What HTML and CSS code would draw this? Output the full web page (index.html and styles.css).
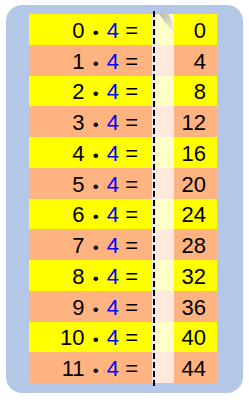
FILE: index.html
```html
<!DOCTYPE html>
<html>
<head>
<meta charset="utf-8">
<link rel="stylesheet" href="styles.css">
</head>
<body>
<div class="panel">
  <div class="table">
    <div class="row y"><div class="q"><span>0 <span class="dot">•</span> <span class="b">4</span> =</span></div><div class="gut"></div><div class="hide"></div><div class="a">0</div></div>
    <div class="row p"><div class="q"><span>1 <span class="dot">•</span> <span class="b">4</span> =</span></div><div class="gut"></div><div class="hide"></div><div class="a">4</div></div>
    <div class="row y"><div class="q"><span>2 <span class="dot">•</span> <span class="b">4</span> =</span></div><div class="gut"></div><div class="hide"></div><div class="a">8</div></div>
    <div class="row p"><div class="q"><span>3 <span class="dot">•</span> <span class="b">4</span> =</span></div><div class="gut"></div><div class="hide"></div><div class="a">12</div></div>
    <div class="row y"><div class="q"><span>4 <span class="dot">•</span> <span class="b">4</span> =</span></div><div class="gut"></div><div class="hide"></div><div class="a">16</div></div>
    <div class="row p"><div class="q"><span>5 <span class="dot">•</span> <span class="b">4</span> =</span></div><div class="gut"></div><div class="hide"></div><div class="a">20</div></div>
    <div class="row y"><div class="q"><span>6 <span class="dot">•</span> <span class="b">4</span> =</span></div><div class="gut"></div><div class="hide"></div><div class="a">24</div></div>
    <div class="row p"><div class="q"><span>7 <span class="dot">•</span> <span class="b">4</span> =</span></div><div class="gut"></div><div class="hide"></div><div class="a">28</div></div>
    <div class="row y"><div class="q"><span>8 <span class="dot">•</span> <span class="b">4</span> =</span></div><div class="gut"></div><div class="hide"></div><div class="a">32</div></div>
    <div class="row p"><div class="q"><span>9 <span class="dot">•</span> <span class="b">4</span> =</span></div><div class="gut"></div><div class="hide"></div><div class="a">36</div></div>
    <div class="row y"><div class="q"><span>10 <span class="dot">•</span> <span class="b">4</span> =</span></div><div class="gut"></div><div class="hide"></div><div class="a">40</div></div>
    <div class="row p"><div class="q"><span>11 <span class="dot">•</span> <span class="b">4</span> =</span></div><div class="gut"></div><div class="hide"></div><div class="a">44</div></div>
    <div class="dash"></div>
    <svg class="curl" width="19" height="20" viewBox="0 0 19 20">
      <defs>
        <linearGradient id="cg" x1="0" y1="0" x2="1" y2="1">
          <stop offset="0" stop-color="#b9b6a3"/>
          <stop offset="0.55" stop-color="#dcdac8"/>
          <stop offset="1" stop-color="#f4f3e2"/>
        </linearGradient>
      </defs>
      <path d="M0 0 H4 L0 5 Z" fill="#eef0ee"/>
      <path d="M3 0 H12 Q17 4 18 19 Q10 10 3 0 Z" fill="url(#cg)"/>
    </svg>
  </div>
</div>
</body>
</html>
```
FILE: styles.css
```css
html, body {
  margin: 0;
  padding: 0;
  background: #ffffff;
}
body {
  font-family: "Liberation Sans", Arial, sans-serif;
}
.panel {
  margin: 5px 0 0 6px;
  width: 237px;
  height: 388px;
  box-sizing: border-box;
  background: #b4c7e7;
  border-radius: 16px;
  padding: 9px 26px 10px 23px;
}
.table {
  position: relative;
  height: 369px;
  display: flex;
  flex-direction: column;
}
.row {
  flex: 1 1 0;
  display: grid;
  grid-template-columns: 123px 4px 18px 43px;
  font-size: 22px;
  color: #000;
}
.q, .a {
  display: flex;
  align-items: center;
  justify-content: flex-end;
  padding-top: 3px;
  white-space: pre;
}
.q { padding-right: 14px; }
.a { padding-right: 11px; }
.b { color: #0000ff; }
.dot { font-size: 17px; margin: 0 2px; }
.y .q, .y .a { background: #ffff00; }
.p .q, .p .a { background: #ffb380; }
.gut { background: #e8edf5; }
.y .hide { background: #ffffc8; }
.p .hide { background: #ffe9dc; }
.dash {
  position: absolute;
  left: 124px;
  top: -3px;
  bottom: -5px;
  width: 2px;
  background: repeating-linear-gradient(to bottom, #000 0, #000 6px, transparent 6px, transparent 9px);
}
.curl {
  position: absolute;
  left: 127px;
  top: 0;
}
```
